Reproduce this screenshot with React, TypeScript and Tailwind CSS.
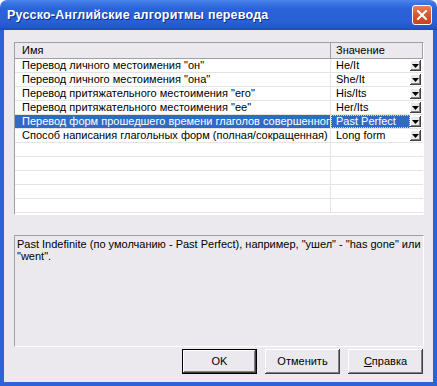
import React from "react";

const rows: [string, string][] = [
  ['Перевод личного местоимения "он"', "He/It"],
  ['Перевод личного местоимения "она"', "She/It"],
  ['Перевод притяжательного местоимения "его"', "His/Its"],
  ['Перевод притяжательного местоимения "ее"', "Her/Its"],
  ["Перевод форм прошедшего времени глаголов совершенного вида", "Past Perfect"],
  ["Способ написания глагольных форм (полная/сокращенная)", "Long form"],
];

const DropButton: React.FC = () => (
  <div className="w-[11px] h-[11px] shrink-0 bg-[#ebe9ed] shadow-[inset_-1px_-1px_0_#404040,inset_1px_1px_0_#ffffff,inset_-2px_-2px_0_#808080] flex items-center justify-center">
    <svg width="7" height="4" viewBox="0 0 7 4">
      <path d="M0 0h7L3.5 4z" fill="#000" />
    </svg>
  </div>
);

const Button: React.FC<{ isDefault?: boolean; children: React.ReactNode }> = ({ isDefault, children }) => (
  <div
    className={
      isDefault
        ? "w-[75px] h-[25px] border border-black bg-[#ebe9ed] shadow-[inset_-1px_-1px_0_#404040,inset_1px_1px_0_#ffffff,inset_-2px_-2px_0_#808080] flex items-center justify-center"
        : "w-[75px] h-[25px] bg-[#ebe9ed] shadow-[inset_-1px_-1px_0_#404040,inset_1px_1px_0_#ffffff,inset_-2px_-2px_0_#808080] flex items-center justify-center"
    }
  >
    {children}
  </div>
);

const App: React.FC = () => {
  return (
    <div className="w-[437px] h-[386px] flex flex-col bg-white font-['Liberation_Sans',Arial,sans-serif] text-[11px] text-black">
      {/* Title bar */}
      <div className="h-[30px] shrink-0 rounded-t-[7px] bg-[linear-gradient(to_bottom,#4a86ea_0%,#3a74e2_12%,#2a62d8_30%,#2a60d6_70%,#2656cc_90%,#1e48b8_100%)] flex items-center pl-[7px] pr-[5px]">
        <div className="flex-1 text-white font-bold text-[12.5px] tracking-[0.2px] [text-shadow:1px_1px_0_#0c2a8a]">
          Русско-Английские алгоритмы перевода
        </div>
        <div className="w-[20px] h-[20px] rounded-[3px] border border-white bg-[linear-gradient(to_bottom,#e8805c,#d8552e_50%,#c4441e)] flex items-center justify-center">
          <svg width="10" height="10" viewBox="0 0 10 10">
            <path d="M1 1L9 9M9 1L1 9" stroke="#fff" strokeWidth="2" strokeLinecap="square" />
          </svg>
        </div>
      </div>

      {/* Body */}
      <div className="flex-1 flex flex-col border-x-[4px] border-b-[4px] border-[#2f62d6] bg-[#ebe9ed] pl-[10px] pr-[9px] pt-[12px]">
        {/* Grid */}
        <div className="h-[173px] shrink-0 border border-t-[#a0a0a0] border-l-[#a0a0a0] border-b-white border-r-white bg-white overflow-hidden flex flex-col">
          <div className="h-[16px] shrink-0 flex bg-[#ebe9ed] border-b border-[#a0a0a0]">
            <div className="w-[316px] border-r border-[#a0a0a0] pl-[7px] leading-[15px]">Имя</div>
            <div className="flex-1 pl-[5px] leading-[15px] border-r border-[#a0a0a0]">Значение</div>
          </div>
          {rows.map(([name, value], i) => {
            const selected = i === 4;
            return (
              <div key={i} className="h-[14px] shrink-0 flex border-b border-[#e4e4e4]">
                <div
                  className={
                    selected
                      ? "w-[316px] shrink-0 border-r border-[#e4e4e4] pl-[7px] leading-[13px] whitespace-nowrap overflow-hidden bg-[#316ac5] text-white"
                      : "w-[316px] shrink-0 border-r border-[#e4e4e4] pl-[7px] leading-[13px] whitespace-nowrap overflow-hidden"
                  }
                >
                  {name}
                </div>
                <div className="flex-1 min-w-0 flex items-center pr-[2px]">
                  <div
                    className={
                      selected
                        ? "flex-1 min-w-0 h-full pl-[4px] leading-[11px] whitespace-nowrap overflow-hidden bg-[#316ac5] text-white border border-dotted border-[#c8d4f0]"
                        : "flex-1 min-w-0 h-full pl-[5px] leading-[13px] whitespace-nowrap overflow-hidden"
                    }
                  >
                    {value}
                  </div>
                  <DropButton />
                </div>
              </div>
            );
          })}
          {Array.from({ length: 5 }, (_, i) => (
            <div key={`e-${i}`} className="h-[14px] shrink-0 flex border-b border-[#e4e4e4]">
              <div className="w-[316px] shrink-0 border-r border-[#e4e4e4]" />
              <div className="flex-1" />
            </div>
          ))}
        </div>

        {/* Description */}
        <div className="mt-[20px] h-[112px] shrink-0 border border-t-[#a0a0a0] border-l-[#a0a0a0] border-b-white border-r-white px-[2px] pt-[2px] leading-[12px]">
          Past Indefinite (по умолчанию - Past Perfect), например, "ушел" - "has gone" или
          <br />
          "went".
        </div>

        {/* Buttons */}
        <div className="mt-[2px] flex justify-end gap-[8px] pr-px">
          <Button isDefault>OK</Button>
          <Button>Отменить</Button>
          <Button>
            <span>
              <span className="underline">С</span>правка
            </span>
          </Button>
        </div>
      </div>
    </div>
  );
};

export default App;
